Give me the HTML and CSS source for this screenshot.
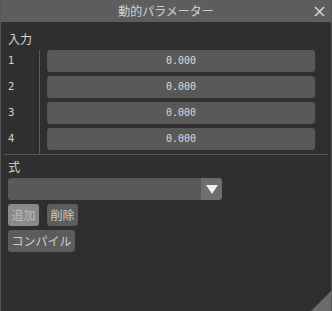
FILE: index.html
```html
<!DOCTYPE html>
<html lang="ja">
  <head>
    <meta charset="UTF-8" />
    <title>動的パラメーター</title>
    <link rel="stylesheet" href="styles.css">
  </head>
  <body>
    <div class="window">
      <!-- タイトルバー -->
      <div class="titleBar">
        <span class="title">動的パラメーター</span>
        <svg class="closeBtn" width="11" height="11" viewBox="0 0 11 11">
          <path d="M1 1 L10 10 M10 1 L1 10" stroke="#e0e0e0" stroke-width="1.4" fill="none" />
        </svg>
      </div>

      <div class="content">
        <!-- 入力 -->
        <div class="sectionLabel inputLabel">入力</div>
        <div class="params">
          <div class="paramNames">
            <span>1</span>
            <span>2</span>
            <span>3</span>
            <span>4</span>
          </div>
          <div class="paramFields">
            <div class="field">0.000</div>
            <div class="field">0.000</div>
            <div class="field">0.000</div>
            <div class="field">0.000</div>
          </div>
        </div>

        <div class="separator"></div>

        <!-- 式 -->
        <div class="formula">
          <div class="sectionLabel">式</div>
          <div class="select">
            <div class="selectValue"></div>
            <div class="selectArrow">
              <svg width="12" height="10" viewBox="0 0 12 10">
                <polygon points="0,1 12,1 6,10" fill="#f2f2f2" />
              </svg>
            </div>
          </div>
          <div class="btnRow">
            <button class="btn disabled">追加</button>
            <button class="btn">削除</button>
          </div>
          <div class="btnRow">
            <button class="btn">コンパイル</button>
          </div>
        </div>
      </div>

      <div class="grip"></div>
    </div>
  </body>
</html>
```

FILE: styles.css
```css
body {
  margin: 0;
  padding: 0;
  background: #2f2f2f;
  font-family: "Noto Sans CJK JP", "Noto Sans", sans-serif;
  color: #d8d8d8;
}

.window {
  position: relative;
  width: 332px;
  height: 311px;
  box-sizing: border-box;
  background: #2f2f2f;
  border-left: 1px solid #585858;
  border-right: 1px solid #585858;
  overflow: hidden;
}

.titleBar {
  position: relative;
  height: 22px;
  background: #5e5e5e;
  display: flex;
  align-items: center;
  justify-content: center;
}

.title {
  font-size: 12px;
  line-height: 22px;
  color: #d4d4d4;
}

.closeBtn {
  position: absolute;
  right: 6px;
  top: 6px;
}

.content {
  padding: 0 3px;
}

.sectionLabel {
  font-size: 12px;
  line-height: 17px;
  padding-left: 4px;
  color: #d8d8d8;
}

.inputLabel {
  margin-top: 8px;
}

.params {
  display: flex;
  margin-top: 3px;
  padding-left: 4px;
}

.paramNames {
  width: 31px;
  border-right: 1px solid #5c5c5c;
  display: flex;
  flex-direction: column;
  gap: 4px;
  padding-bottom: 4px;
}

.paramNames span {
  height: 22px;
  line-height: 22px;
  font-family: "DejaVu Sans", sans-serif;
  font-size: 10px;
}

.paramFields {
  display: flex;
  flex-direction: column;
  gap: 4px;
  margin-left: 7px;
  width: 268px;
}

.field {
  height: 22px;
  line-height: 22px;
  background: #595959;
  border-radius: 3px;
  text-align: center;
  font-family: "DejaVu Sans Mono", monospace;
  font-size: 10px;
  color: #dcdcdc;
}

.separator {
  border-top: 1px solid #5c5c5c;
}

.formula {
  padding-left: 4px;
  display: flex;
  flex-direction: column;
  gap: 4px;
}

.formula .sectionLabel {
  padding-left: 0;
  margin-top: 3px;
  margin-bottom: -1px;
}

.select {
  display: flex;
  width: 214px;
  height: 22px;
  border-radius: 3px;
  overflow: hidden;
}

.selectValue {
  flex: 1;
  background: #595959;
}

.selectArrow {
  width: 21px;
  background: #6e6e6e;
  display: flex;
  align-items: center;
  justify-content: center;
}

.btnRow {
  display: flex;
  gap: 8px;
}

.btn {
  height: 22px;
  padding: 0 3.5px;
  border: none;
  outline: none;
  border-radius: 3px;
  background: #5c5c5c;
  color: #cfcfcf;
  font-family: "Noto Sans CJK JP", sans-serif;
  font-size: 12px;
  line-height: 22px;
}

.btn.disabled {
  background: #8a8a8a;
  color: #bdbdbd;
}

.grip {
  position: absolute;
  right: 0;
  bottom: 0;
  width: 0;
  height: 0;
  border-left: 20px solid transparent;
  border-bottom: 20px solid #6a6a6a;
}
```
